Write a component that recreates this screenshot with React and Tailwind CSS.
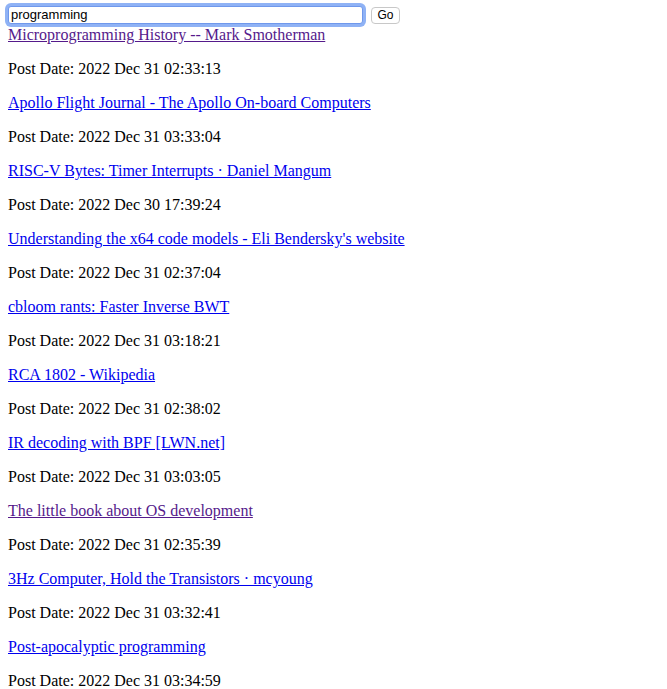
import React from "react";

const posts = [
  { title: "Microprogramming History -- Mark Smotherman", date: "2022 Dec 31 02:33:13", visited: true },
  { title: "Apollo Flight Journal - The Apollo On-board Computers", date: "2022 Dec 31 03:33:04" },
  { title: "RISC-V Bytes: Timer Interrupts · Daniel Mangum", date: "2022 Dec 30 17:39:24" },
  { title: "Understanding the x64 code models - Eli Bendersky's website", date: "2022 Dec 31 02:37:04" },
  { title: "cbloom rants: Faster Inverse BWT", date: "2022 Dec 31 03:18:21" },
  { title: "RCA 1802 - Wikipedia", date: "2022 Dec 31 02:38:02" },
  { title: "IR decoding with BPF [LWN.net]", date: "2022 Dec 31 03:03:05" },
  { title: "The little book about OS development", date: "2022 Dec 31 02:35:39", visited: true },
  { title: "3Hz Computer, Hold the Transistors · mcyoung", date: "2022 Dec 31 03:32:41" },
  { title: "Post-apocalyptic programming", date: "2022 Dec 31 03:34:59" },
];

export default function App() {
  return (
    <div className="bg-white min-h-screen px-2 pt-[5px] pb-2 font-['Liberation_Serif',_'Times_New_Roman',_serif] text-base leading-[normal] text-black">
      {/* Search form */}
      <form className="flex items-center gap-[8px] h-[19px]" onSubmit={(e) => e.preventDefault()}>
        <input
          type="text"
          defaultValue="programming"
          className="w-[355px] h-[18px] px-[2px] bg-white border border-[#6f98ec] rounded-[3px] outline-none ring-[3px] ring-[#8fb2f5] font-['Liberation_Sans',_Arial,_sans-serif] text-[13px] text-black caret-black"
        />
        <button
          type="submit"
          className="w-[29px] h-[17px] mt-[1px] bg-white border border-[#c8c8c8] rounded-[4px] font-['Liberation_Sans',_Arial,_sans-serif] text-[12px] leading-none text-black"
        >
          Go
        </button>
      </form>

      {/* Results */}
      <div className="mt-[2px]">
        {posts.map((post, i) => (
          <div key={i}>
            <div>
              <a
                href="#"
                className={`underline ${post.visited ? "text-[#551a8b]" : "text-[#0000ee]"}`}
              >
                {post.title}
              </a>
            </div>
            <p className="my-4">Post Date: {post.date}</p>
          </div>
        ))}
      </div>
    </div>
  );
}
